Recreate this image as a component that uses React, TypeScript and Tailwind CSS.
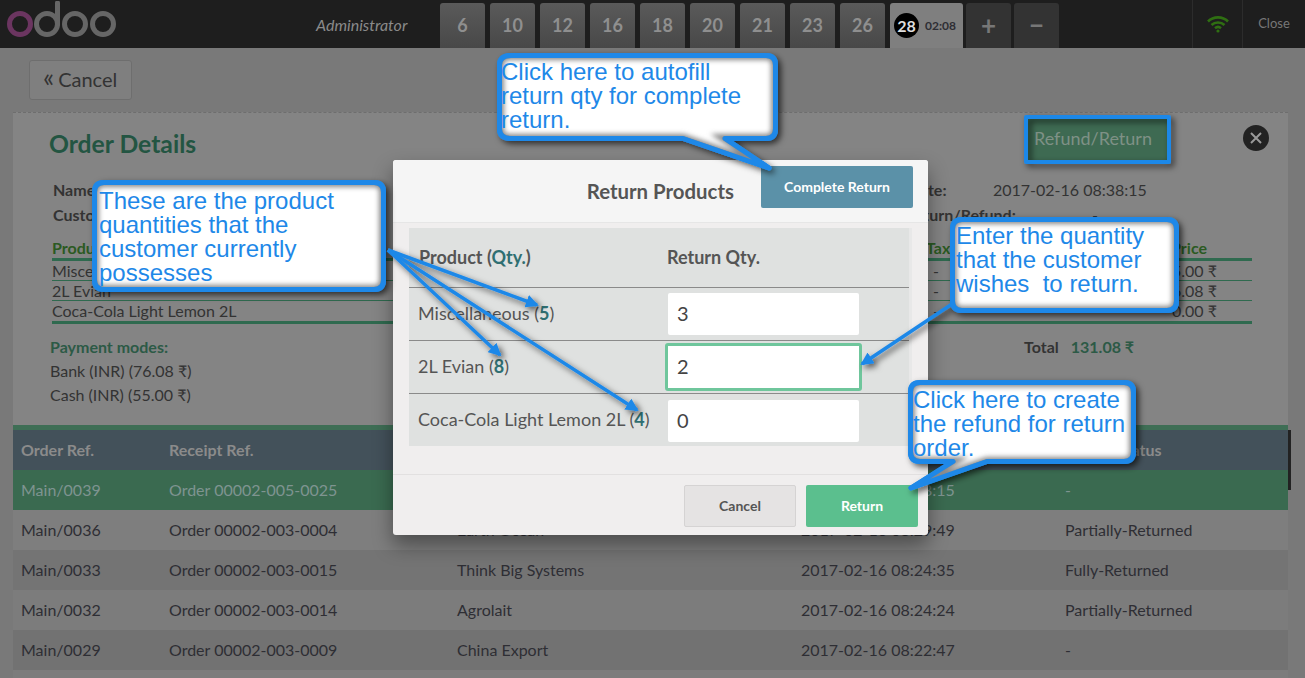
import React from 'react';

const tickets = ['6', '10', '12', '16', '18', '20', '21', '23', '26'];

const orders = [
  { ref: 'Main/0039', receipt: 'Order 00002-005-0025', partner: '', date: '2017-02-16 08:38:15', status: '-', bg: 'bg-[#3a6a50] text-[#7f9490]' },
  { ref: 'Main/0036', receipt: 'Order 00002-003-0004', partner: 'Earth Ocean', date: '2017-02-16 08:29:49', status: 'Partially-Returned', bg: 'bg-[#7e7e7e] text-[#2e2e34]' },
  { ref: 'Main/0033', receipt: 'Order 00002-003-0015', partner: 'Think Big Systems', date: '2017-02-16 08:24:35', status: 'Fully-Returned', bg: 'bg-[#747474] text-[#2e2e34]' },
  { ref: 'Main/0032', receipt: 'Order 00002-003-0014', partner: 'Agrolait', date: '2017-02-16 08:24:24', status: 'Partially-Returned', bg: 'bg-[#7c7c7c] text-[#2e2e34]' },
  { ref: 'Main/0029', receipt: 'Order 00002-003-0009', partner: 'China Export', date: '2017-02-16 08:22:47', status: '-', bg: 'bg-[#727272] text-[#2e2e34]' },
  { ref: '', receipt: '', partner: '', date: '', status: '', bg: 'bg-[#7c7c7c] text-[#2e2e34]' },
];

const lines = [
  { name: 'Miscellaneous', price: '55.00 ₹' },
  { name: '2L Evian', price: '76.08 ₹' },
  { name: 'Coca-Cola Light Lemon 2L', price: '0.00 ₹' },
];

const returns = [
  { name: 'Miscellaneous', qty: '5', value: '3', focus: false },
  { name: '2L Evian', qty: '8', value: '2', focus: true },
  { name: 'Coca-Cola Light Lemon 2L', qty: '4', value: '0', focus: false },
];

const OdooLogo = () => (
  <svg width="112" height="40" viewBox="0 0 112 40" fill="none" className="ml-[6px] mt-[1px]">
    <circle cx="14" cy="23" r="10.5" stroke="#6b3560" strokeWidth="5" />
    <circle cx="41" cy="23" r="10.5" stroke="#666" strokeWidth="5" />
    <path d="M51.5 23V2" stroke="#666" strokeWidth="5" strokeLinecap="round" />
    <circle cx="69" cy="23" r="10.5" stroke="#666" strokeWidth="5" />
    <circle cx="97" cy="23" r="10.5" stroke="#666" strokeWidth="5" />
  </svg>
);

const Wifi = () => (
  <svg width="22" height="18" viewBox="0 0 22 18" fill="none" stroke="#2f6f12" strokeWidth="2.6">
    <path d="M1 6.5C6.5 1 15.5 1 21 6.5" />
    <path d="M4.5 10C8 6.6 14 6.6 17.5 10" />
    <path d="M8 13.2C9.7 11.8 12.3 11.8 14 13.2" />
    <circle cx="11" cy="16" r="1.6" fill="#2f6f12" stroke="none" />
  </svg>
);

const BLUE = '#1e88e8';

// outlines of the four speech bubbles
const bubbles = [
  'M511 55.5H766Q775.5 55.5 775.5 65V129Q775.5 138.5 766 138.5H725L769 168L683 138.5H511Q499.5 138.5 499.5 129V65Q499.5 55.5 511 55.5Z',
  'M104 182.5H374Q383.5 182.5 383.5 192V280Q383.5 289.5 374 289.5H104Q94.5 289.5 94.5 280V192Q94.5 182.5 104 182.5Z',
  'M962 219.5H1167Q1176.5 219.5 1176.5 229V301Q1176.5 310.5 1167 310.5H962Q952.5 310.5 952.5 301V229Q952.5 219.5 962 219.5Z',
  'M920 382.5H1124Q1133.5 382.5 1133.5 392V452Q1133.5 461.5 1124 461.5H987L911 488L953 461.5H920Q910.5 461.5 910.5 452V392Q910.5 382.5 920 382.5Z',
];

const CalloutShapes = () => (
  <svg className="absolute left-0 top-0" width="1305" height="678" viewBox="0 0 1305 678" fill="none">
    <defs>
      <filter id="callout-shadow" x="-20%" y="-20%" width="140%" height="140%">
        <feDropShadow dx="3" dy="3" stdDeviation="3" floodColor="#000" floodOpacity="0.65" />
      </filter>
      <filter id="inner-blur" x="-10%" y="-10%" width="120%" height="120%">
        <feGaussianBlur stdDeviation="2.5" />
      </filter>
      <marker id="arrow-head" markerUnits="userSpaceOnUse" markerWidth="13" markerHeight="13" refX="11" refY="6.5" orient="auto">
        <path d="M0 0L13 6.5L0 13Z" fill={BLUE} />
      </marker>
      {bubbles.map((d, i) => (
        <clipPath key={i} id={`bubble-clip-${i}`}>
          <path d={d} />
        </clipPath>
      ))}
    </defs>
    <g filter="url(#callout-shadow)" stroke={BLUE} strokeLinejoin="round">
      <rect x="1026" y="117" width="143" height="45" strokeWidth="4" />
      <path d="M388 250L537 305" strokeWidth="3.5" markerEnd="url(#arrow-head)" />
      <path d="M388 250L500 355" strokeWidth="3.5" markerEnd="url(#arrow-head)" />
      <path d="M388 250L637 410" strokeWidth="3.5" markerEnd="url(#arrow-head)" />
      <path d="M952 304L862 364" strokeWidth="3.5" markerEnd="url(#arrow-head)" />
      {bubbles.map((d, i) => (
        <path key={i} d={d} fill="#fff" strokeWidth="5" />
      ))}
    </g>
    {bubbles.map((d, i) => (
      <g key={i}>
        <g clipPath={`url(#bubble-clip-${i})`}>
          <path d={d} stroke="#8a8a8a" strokeWidth="9" filter="url(#inner-blur)" />
        </g>
        <path d={d} stroke={BLUE} strokeWidth="5" strokeLinejoin="round" />
      </g>
    ))}
  </svg>
);

const CalloutText = ({ className, children }: { className: string; children: React.ReactNode }) => (
  <div className={`absolute whitespace-pre text-[24px] leading-[24px] text-[#1e88e8] font-['Liberation_Sans',Arial,sans-serif] ${className}`}>
    {children}
  </div>
);

const ReturnModal = () => (
  <div className="absolute left-[393px] top-[160px] w-[535px] h-[375px] bg-[#f0eeee] rounded-[3px] shadow-[0_10px_20px_rgba(0,0,0,0.4)] flex flex-col">
    <div className="h-[63px] bg-[#f5f5f5] border-b border-[#e6e6e6] rounded-t-[3px] flex items-start">
      <div className="w-[341px] mt-[19px] text-right text-[20.4px] leading-[24px] font-bold text-[#555]">Return Products</div>
      <button className="ml-[27px] mt-[6px] w-[152px] h-[42px] pb-[1px] bg-[#5b91a8] rounded-[2px] text-white text-[14px] font-bold">Complete Return</button>
    </div>
    <div className="mx-[16px] mt-[5px] w-[503px] h-[218px] bg-[#dfe1e0] border-r-[3px] border-[#e8e8e8]">
      <div className="h-[60px] flex items-center text-[18px] font-bold text-[#555] border-b border-[#8a8a8a]">
        <div className="w-[258px] pl-[10px]">Product (<span className="text-[#2f6f72]">Qty.</span>)</div>
        <div>Return Qty.</div>
      </div>
      {returns.map((row, i) => (
        <div key={row.name} className={`h-[53px] flex items-center text-[18px] text-[#555] ${i < 2 ? 'border-b border-[#8a8a8a]' : ''}`}>
          <div className="w-[259px] pl-[9px] pb-[2px] whitespace-nowrap">
            {row.name} (<span className="font-bold text-[#2f6f72]">{row.qty}</span>)
          </div>
          {row.focus ? (
            <div className="-ml-[3px] w-[197px] h-[48px] pb-[2px] bg-white border-[3px] border-[#6fc69c] rounded-[3px] pl-[9px] flex items-center text-[20px] text-[#444]">{row.value}</div>
          ) : (
            <div className="w-[191px] h-[42px] pb-[2px] bg-white rounded-[2px] pl-[9px] flex items-center text-[20px] text-[#444]">{row.value}</div>
          )}
        </div>
      ))}
    </div>
    <div className="mt-[28px] border-t border-[#e2e0e0] flex justify-end gap-[10px] pt-[10px] pr-[10px]">
      <button className="w-[112px] h-[42px] pb-[2px] bg-[#e5e3e3] border border-[#d5d3d3] rounded-[2px] text-[14px] font-bold text-[#555]">Cancel</button>
      <button className="w-[112px] h-[42px] pb-[2px] bg-[#5bbf8e] rounded-[2px] text-[14px] font-bold text-white">Return</button>
    </div>
  </div>
);

export default function App() {
  return (
    <div className="relative w-[1305px] h-[678px] overflow-hidden bg-[#797979] text-[#333] font-['Lato','Noto_Sans',sans-serif]">
      {/* Top bar */}
      <div className="h-[48px] bg-[#1e1e1e] flex">
        <div className="w-[316px]"><OdooLogo /></div>
        <div className="w-[124px] leading-[50px] text-[16px] italic text-[#8a8a8a]">Administrator</div>
        <div className="flex items-end h-[48px]">
          {tickets.map((t) => (
            <div key={t} className="w-[45px] h-[45px] mr-[5px] bg-gradient-to-b from-[#5a5a5a] to-[#484848] rounded-t-[3px] flex items-center justify-center text-[18px] font-bold text-[#8f8f8f]">{t}</div>
          ))}
          <div className="w-[73px] h-[45px] bg-[#7f7f7f] rounded-t-[3px] flex items-center pl-[4px] gap-[6px]">
            <span className="w-[25px] h-[25px] rounded-full bg-black text-[#ddd] text-[16px] font-bold flex items-center justify-center">28</span>
            <span className="text-[12px] font-bold text-[#2e2e34]">02:08</span>
          </div>
          <div className="w-[45px] h-[45px] ml-[3px] bg-[#333] rounded-t-[3px] flex items-center justify-center text-[26px] font-bold text-[#777]">+</div>
          <div className="w-[45px] h-[45px] ml-[3px] bg-[#333] rounded-t-[3px] flex items-center justify-center text-[26px] font-bold text-[#777]">−</div>
        </div>
        <div className="ml-[133px] w-[50px] border-l border-[#2c2c2c] flex items-center justify-center"><Wifi /></div>
        <div className="w-[63px] border-l border-[#2c2c2c] flex items-center justify-center text-[13px] text-[#777]">Close</div>
      </div>

      {/* Screen */}
      <div className="pt-[12px]">
        <button className="ml-[29px] w-[103px] h-[40px] pl-[13px] border border-[#6e6e6e] bg-[#7f7f7f] rounded-[3px] text-[20px] text-[#333] flex items-center gap-[4px]">
          <span className="text-[26px] leading-[26px] -mt-[6px]">«</span>
          <span className="-mt-[3px]">Cancel</span>
        </button>
        <div className="mt-[12px] ml-[13px] w-[1275px] h-[313px] bg-[#848484] border-t border-dashed border-[#6e6e6e] relative">
          <div className="pl-[36px] pt-[8px] flex h-[54px] items-center">
            <h1 className="text-[24.7px] font-bold text-[#235542]">Order Details</h1>
          </div>
          <div className="absolute right-[19px] top-[12px] w-[26px] h-[26px] rounded-full bg-[#222] flex items-center justify-center">
            <svg width="14" height="14" viewBox="0 0 14 14" stroke="#999" strokeWidth="2"><path d="M2 2L12 12M12 2L2 12" /></svg>
          </div>
          <button className="absolute left-[1013px] top-[3px] w-[143px] h-[45px] pl-[8px] text-left bg-[#3e6a52] text-[18px] text-[#7f9186]">Refund/Return</button>

          <div className="grid grid-cols-[852px_1fr] pl-[40px] pt-[10px] text-[16px] leading-[25px] font-bold">
            <div>Name</div>
            <div className="flex"><span className="w-[88px] pl-[3px]">Date:</span><span className="font-normal">2017-02-16 08:38:15</span></div>
            <div>Customer</div>
            <div className="flex"><span className="w-[187px]">Return/Refund:</span><span className="font-normal">-</span></div>
          </div>

          <div className="ml-[39px] mt-[9px] w-[1200px]">
            <div className="h-[25px] border-b-[3px] border-[#2f6a4f] relative text-[16px] leading-[24px] font-bold text-[#2b5a22]">
              <span className="absolute left-0 top-0">Product</span>
              <span className="absolute left-[874px] top-0">Tax</span>
              <span className="absolute right-[45px] top-0">Price</span>
            </div>
            {lines.map((line, i) => (
              <div key={line.name} className={`h-[20px] leading-[20px] relative text-[16px] ${i < 2 ? 'border-b border-[#2f6a4f]' : ''}`}>
                <span>{line.name}</span>
                <span className="absolute left-[881px] top-0">-</span>
                <span className="absolute right-[35px] top-0">{line.price}</span>
              </div>
            ))}
            <div className="h-[3px] bg-[#2f6a4f]" />
          </div>

          <div className="flex pl-[37px] mt-[11px] text-[16px]">
            <div className="w-[974px]">
              <div className="leading-[24px] font-bold text-[#2c5a46]">Payment modes:</div>
              <div className="leading-[24px]">Bank (INR) (76.08 ₹)</div>
              <div className="leading-[24px]">Cash (INR) (55.00 ₹)</div>
            </div>
            <div className="leading-[24px] font-bold">Total<span className="ml-[12px] text-[#2c5a46]">131.08 ₹</span></div>
          </div>
        </div>

        {/* Orders */}
        <div className="ml-[13px] w-[1275px] border-t-[5px] border-[#3e6e55] text-[16px]">
          <div className="h-[40px] bg-[#43515a] grid grid-cols-[148px_288px_344px_264px_1fr] pl-[8px] items-center font-bold text-[#8b8b8b]">
            <div>Order Ref.</div>
            <div>Receipt Ref.</div>
            <div>Customer</div>
            <div>Order Date</div>
            <div>Return Status</div>
          </div>
          {orders.map((o, i) => (
            <div key={i} className={`h-[40px] grid grid-cols-[148px_288px_344px_264px_1fr] pl-[8px] items-center ${o.bg}`}>
              <div>{o.ref}</div>
              <div>{o.receipt}</div>
              <div>{o.partner}</div>
              <div>{o.date}</div>
              <div>{o.status}</div>
            </div>
          ))}
        </div>
      </div>
      <div className="absolute left-[1288px] top-[430px] w-[3px] h-[60px] bg-[#222]" />

      <ReturnModal />
      <CalloutShapes />
      <CalloutText className="left-[501px] top-[60px]">{'Click here to autofill\nreturn qty for complete\nreturn.'}</CalloutText>
      <CalloutText className="left-[99px] top-[189px]">{'These are the product\nquantities that the\ncustomer currently\npossesses'}</CalloutText>
      <CalloutText className="left-[956px] top-[224px]">{'Enter the quantity\nthat the customer\nwishes  to return.'}</CalloutText>
      <CalloutText className="left-[913px] top-[388px]">{'Click here to create\nthe refund for return\norder.'}</CalloutText>
    </div>
  );
}
